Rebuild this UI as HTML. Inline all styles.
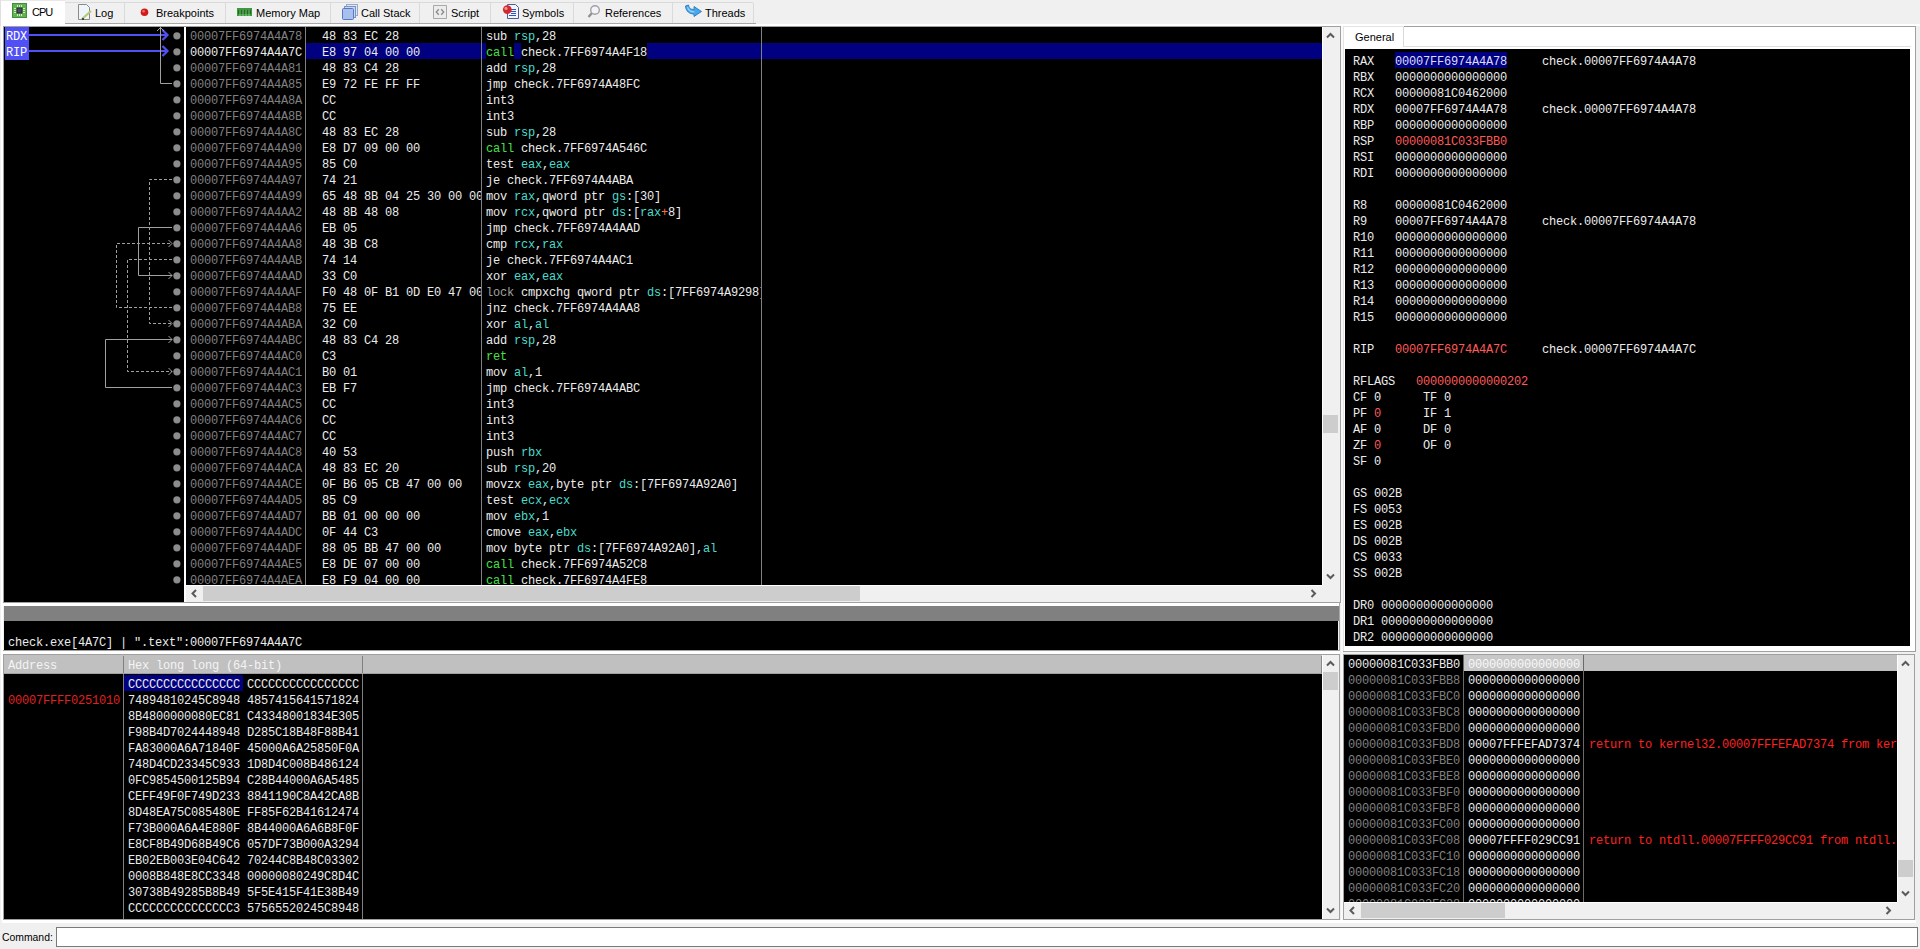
<!DOCTYPE html><html><head><meta charset="utf-8"><style>
*{margin:0;padding:0;box-sizing:border-box}
html,body{width:1920px;height:949px;overflow:hidden;background:#f0f0f0;position:relative}
div{position:absolute}
.m{font-family:"Liberation Mono",monospace;font-size:12px;letter-spacing:-0.2px;line-height:16px;white-space:pre;color:#ececec}
.s{font-family:"Liberation Sans",sans-serif;font-size:11px;line-height:14px;white-space:pre;color:#000}
.g{color:#808080}
.w{color:#ececec}
.r{color:#40c4c4}
.c{color:#3cc83c}
.red{color:#ff5a5a}
</style></head><body><div style="left:0px;top:0px;width:1920px;height:26px;background:#f0f0f0;"></div>
<div style="left:65px;top:2px;width:688px;height:1px;background:#dadada;"></div>
<div style="left:65px;top:23px;width:691px;height:1px;background:#a8a8a8;"></div>
<div style="left:0px;top:24px;width:1920px;height:2px;background:#ffffff;"></div>
<div style="left:0px;top:0px;width:65px;height:26px;background:#ffffff;border-left:1px solid #e0e0e0;border-top:1px solid #e8e8e8;"></div>
<div class="s" style="left:32px;top:5px;letter-spacing:-1px">CPU</div>
<div style="left:124px;top:3px;width:1px;height:20px;background:#dadada;"></div>
<div class="s" style="left:95px;top:6px;">Log</div>
<div style="left:225px;top:3px;width:1px;height:20px;background:#dadada;"></div>
<div class="s" style="left:156px;top:6px;">Breakpoints</div>
<div style="left:330px;top:3px;width:1px;height:20px;background:#dadada;"></div>
<div class="s" style="left:256px;top:6px;">Memory Map</div>
<div style="left:419px;top:3px;width:1px;height:20px;background:#dadada;"></div>
<div class="s" style="left:361px;top:6px;">Call Stack</div>
<div style="left:490px;top:3px;width:1px;height:20px;background:#dadada;"></div>
<div class="s" style="left:451px;top:6px;">Script</div>
<div style="left:573px;top:3px;width:1px;height:20px;background:#dadada;"></div>
<div class="s" style="left:522px;top:6px;">Symbols</div>
<div style="left:672px;top:3px;width:1px;height:20px;background:#dadada;"></div>
<div class="s" style="left:605px;top:6px;">References</div>
<div style="left:753px;top:3px;width:1px;height:20px;background:#dadada;"></div>
<div class="s" style="left:705px;top:6px;">Threads</div>

<svg width="760" height="24" style="position:absolute;left:0;top:0">
<rect x="12" y="3" width="15" height="15" fill="#3f8f3f"/>
<rect x="13" y="4" width="13" height="13" fill="#62b152"/>
<rect x="16.5" y="7.5" width="6" height="6" fill="#243024"/>
<rect x="17.5" y="8.5" width="4" height="4" fill="#4a4a6a"/>
<g stroke="#cdeec0" stroke-width="1">
<line x1="17.5" y1="5" x2="17.5" y2="7"/><line x1="19.5" y1="5" x2="19.5" y2="7"/><line x1="21.5" y1="5" x2="21.5" y2="7"/>
<line x1="17.5" y1="14" x2="17.5" y2="16"/><line x1="19.5" y1="14" x2="19.5" y2="16"/><line x1="21.5" y1="14" x2="21.5" y2="16"/>
<line x1="14" y1="8.5" x2="16" y2="8.5"/><line x1="14" y1="10.5" x2="16" y2="10.5"/><line x1="14" y1="12.5" x2="16" y2="12.5"/>
<line x1="23" y1="8.5" x2="25" y2="8.5"/><line x1="23" y1="10.5" x2="25" y2="10.5"/><line x1="23" y1="12.5" x2="25" y2="12.5"/>
</g>
<path d="M78.5 4.5 H86.5 L89.5 7.5 V19.5 H78.5 Z" fill="#eef6fb" stroke="#8a8a8a" stroke-width="1"/>
<path d="M82 19 L91 11" stroke="#b8c878" stroke-width="2.2"/>
<circle cx="83" cy="19" r="1" fill="#202020"/>
<circle cx="144.5" cy="12.3" r="3.8" fill="#d21a1a"/>
<circle cx="143.6" cy="11.3" r="1.3" fill="#f07070"/>
<rect x="237" y="8" width="15" height="8" fill="#3c9a3c"/>
<rect x="238" y="10" width="13" height="4" fill="#246824"/>
<g stroke="#8fd88f" stroke-width="0.8"><line x1="240" y1="10" x2="240" y2="16"/><line x1="243" y1="10" x2="243" y2="16"/><line x1="246" y1="10" x2="246" y2="16"/><line x1="249" y1="10" x2="249" y2="16"/></g>
<rect x="346.5" y="4.5" width="11" height="11" fill="#dde8f8" stroke="#98a8c8"/>
<rect x="344.5" y="6.5" width="11" height="11" fill="#c8d8f4" stroke="#8090c0"/>
<rect x="342.5" y="8.5" width="11" height="11" rx="1" fill="#a8c0ee" stroke="#5a78c0"/>
<path d="M433.5 5.5 H446.5 V18.5 H433.5 Z" fill="#ececec" stroke="#a8a8a8"/>
<path d="M438.8 9.3 L436.3 12 L438.8 14.7 M441.2 9.3 L443.7 12 L441.2 14.7" fill="none" stroke="#8a8a8a" stroke-width="1.3"/>
<path d="M507.5 4.5 H515.5 L518.5 7.5 V18.5 H507.5 Z" fill="#f4f6ff" stroke="#4a5aa0"/>
<g stroke="#3050c0" stroke-width="1"><line x1="511" y1="9.5" x2="516" y2="9.5"/><line x1="511" y1="11.5" x2="516" y2="11.5"/><line x1="511" y1="13.5" x2="516" y2="13.5"/><line x1="509" y1="15.5" x2="516" y2="15.5"/></g>
<circle cx="507.3" cy="9.6" r="4.4" fill="#d22a2a"/>
<circle cx="506" cy="8.4" r="1.6" fill="#f09090"/>
<circle cx="595" cy="10" r="4.3" fill="#f4f4f8" stroke="#a0a0a8" stroke-width="1.4"/>
<line x1="591.8" y1="13.3" x2="588.5" y2="17" stroke="#909090" stroke-width="2.2"/>
<path d="M685.5 6 C686 11.5 689.5 14 694 14 L694 16.5 L701.5 11.5 L694 6.5 L694 9.5 C691 9.5 689 8.5 688.5 5 Z" fill="#45a8ec" stroke="#2a78c0" stroke-width="0.9"/>
<path d="M687.5 7 C688.5 10.5 691 12 694.5 12" fill="none" stroke="#9ad8ff" stroke-width="1.1"/>
</svg>
<div style="left:3px;top:26px;width:1338px;height:577px;background:#a0a0a0;"></div>
<div style="left:4px;top:27px;width:180px;height:575px;background:#000;"></div>
<div style="left:184px;top:27px;width:2px;height:575px;background:#ffffff;"></div>
<div style="left:186px;top:27px;width:1136px;height:558px;background:#000;"></div>
<div style="left:1322px;top:27px;width:17px;height:558px;background:#f0f0f0;"></div>
<div style="left:1322px;top:27px;width:1px;height:558px;background:#ffffff;"></div>
<div style="left:1323px;top:415px;width:15px;height:18px;background:#cdcdcd;"></div>
<svg width="17" height="558" style="position:absolute;left:1322px;top:27px"><path d="M5.0,10.5 L8.5,7.0 L12.0,10.5" fill="none" stroke="#5a5a5a" stroke-width="2"/><path d="M5.0,547.5 L8.5,551.0 L12.0,547.5" fill="none" stroke="#5a5a5a" stroke-width="2"/></svg>
<div style="left:186px;top:585px;width:1136px;height:17px;background:#f0f0f0;"></div>
<div style="left:186px;top:585px;width:1136px;height:1px;background:#ffffff;"></div>
<div style="left:203px;top:586px;width:657px;height:15px;background:#cdcdcd;"></div>
<svg width="1136" height="17" style="position:absolute;left:186px;top:585px"><path d="M10,5.0 L6.5,8.5 L10,12.0" fill="none" stroke="#5a5a5a" stroke-width="2"/><path d="M1125.5,5.0 L1129.0,8.5 L1125.5,12.0" fill="none" stroke="#5a5a5a" stroke-width="2"/></svg>
<div style="left:1322px;top:585px;width:17px;height:17px;background:#f0f0f0;"></div>
<div style="left:1339px;top:27px;width:1px;height:575px;background:#f0f0f0;"></div>
<div style="left:186px;top:27px;width:1136px;height:558px;overflow:hidden">
<div style="left:120px;top:16px;width:1016px;height:16px;background:#000080"></div>
<div style="left:119px;top:0;width:1px;height:558px;background:#808080"></div>
<div style="left:295px;top:0;width:1px;height:558px;background:#808080"></div>
<div style="left:575px;top:0;width:1px;height:558px;background:#808080"></div>
<div class="m" style="left:4px;top:2px;color:#808080">00007FF6974A4A78</div>
<div style="left:120px;top:2px;width:175px;height:16px;overflow:hidden"><div class="m" style="left:16px;top:0">48 83 EC 28</div></div>
<div style="left:296px;top:0px;width:279px;height:16px;overflow:hidden"><div class="m" style="left:4px;top:2px"><span style="color:#ececec">sub </span><span style="color:#48dccc">rsp</span><span style="color:#ececec">,28</span></div></div>
<div class="m" style="left:4px;top:18px;color:#ececec">00007FF6974A4A7C</div>
<div style="left:120px;top:18px;width:175px;height:16px;overflow:hidden"><div class="m" style="left:16px;top:0">E8 97 04 00 00</div></div>
<div style="left:296px;top:16px;width:279px;height:16px;overflow:hidden"><div class="m" style="left:4px;top:2px"><span style="color:#48e048;background:#000;display:inline-block;height:14px;vertical-align:top;box-shadow:0 -2px 0 #000">call</span><span style="color:#ececec"> </span><span style="color:#ececec;background:#000;display:inline-block;height:14px;vertical-align:top;box-shadow:0 -2px 0 #000">check.7FF6974A4F18</span></div></div>
<div class="m" style="left:4px;top:34px;color:#808080">00007FF6974A4A81</div>
<div style="left:120px;top:34px;width:175px;height:16px;overflow:hidden"><div class="m" style="left:16px;top:0">48 83 C4 28</div></div>
<div style="left:296px;top:32px;width:279px;height:16px;overflow:hidden"><div class="m" style="left:4px;top:2px"><span style="color:#ececec">add </span><span style="color:#48dccc">rsp</span><span style="color:#ececec">,28</span></div></div>
<div class="m" style="left:4px;top:50px;color:#808080">00007FF6974A4A85</div>
<div style="left:120px;top:50px;width:175px;height:16px;overflow:hidden"><div class="m" style="left:16px;top:0">E9 72 FE FF FF</div></div>
<div style="left:296px;top:48px;width:279px;height:16px;overflow:hidden"><div class="m" style="left:4px;top:2px"><span style="color:#ececec">jmp check.7FF6974A48FC</span></div></div>
<div class="m" style="left:4px;top:66px;color:#808080">00007FF6974A4A8A</div>
<div style="left:120px;top:66px;width:175px;height:16px;overflow:hidden"><div class="m" style="left:16px;top:0">CC</div></div>
<div style="left:296px;top:64px;width:279px;height:16px;overflow:hidden"><div class="m" style="left:4px;top:2px"><span style="color:#ececec">int3</span></div></div>
<div class="m" style="left:4px;top:82px;color:#808080">00007FF6974A4A8B</div>
<div style="left:120px;top:82px;width:175px;height:16px;overflow:hidden"><div class="m" style="left:16px;top:0">CC</div></div>
<div style="left:296px;top:80px;width:279px;height:16px;overflow:hidden"><div class="m" style="left:4px;top:2px"><span style="color:#ececec">int3</span></div></div>
<div class="m" style="left:4px;top:98px;color:#808080">00007FF6974A4A8C</div>
<div style="left:120px;top:98px;width:175px;height:16px;overflow:hidden"><div class="m" style="left:16px;top:0">48 83 EC 28</div></div>
<div style="left:296px;top:96px;width:279px;height:16px;overflow:hidden"><div class="m" style="left:4px;top:2px"><span style="color:#ececec">sub </span><span style="color:#48dccc">rsp</span><span style="color:#ececec">,28</span></div></div>
<div class="m" style="left:4px;top:114px;color:#808080">00007FF6974A4A90</div>
<div style="left:120px;top:114px;width:175px;height:16px;overflow:hidden"><div class="m" style="left:16px;top:0">E8 D7 09 00 00</div></div>
<div style="left:296px;top:112px;width:279px;height:16px;overflow:hidden"><div class="m" style="left:4px;top:2px"><span style="color:#48e048">call</span><span style="color:#ececec"> check.7FF6974A546C</span></div></div>
<div class="m" style="left:4px;top:130px;color:#808080">00007FF6974A4A95</div>
<div style="left:120px;top:130px;width:175px;height:16px;overflow:hidden"><div class="m" style="left:16px;top:0">85 C0</div></div>
<div style="left:296px;top:128px;width:279px;height:16px;overflow:hidden"><div class="m" style="left:4px;top:2px"><span style="color:#ececec">test </span><span style="color:#48dccc">eax</span><span style="color:#ececec">,</span><span style="color:#48dccc">eax</span></div></div>
<div class="m" style="left:4px;top:146px;color:#808080">00007FF6974A4A97</div>
<div style="left:120px;top:146px;width:175px;height:16px;overflow:hidden"><div class="m" style="left:16px;top:0">74 21</div></div>
<div style="left:296px;top:144px;width:279px;height:16px;overflow:hidden"><div class="m" style="left:4px;top:2px"><span style="color:#ececec">je check.7FF6974A4ABA</span></div></div>
<div class="m" style="left:4px;top:162px;color:#808080">00007FF6974A4A99</div>
<div style="left:120px;top:162px;width:175px;height:16px;overflow:hidden"><div class="m" style="left:16px;top:0">65 48 8B 04 25 30 00 00 00</div></div>
<div style="left:296px;top:160px;width:279px;height:16px;overflow:hidden"><div class="m" style="left:4px;top:2px"><span style="color:#ececec">mov </span><span style="color:#48dccc">rax</span><span style="color:#ececec">,qword ptr </span><span style="color:#48dccc">gs</span><span style="color:#ececec">:[30]</span></div></div>
<div class="m" style="left:4px;top:178px;color:#808080">00007FF6974A4AA2</div>
<div style="left:120px;top:178px;width:175px;height:16px;overflow:hidden"><div class="m" style="left:16px;top:0">48 8B 48 08</div></div>
<div style="left:296px;top:176px;width:279px;height:16px;overflow:hidden"><div class="m" style="left:4px;top:2px"><span style="color:#ececec">mov </span><span style="color:#48dccc">rcx</span><span style="color:#ececec">,qword ptr </span><span style="color:#48dccc">ds</span><span style="color:#ececec">:[</span><span style="color:#48dccc">rax</span><span style="color:#ff7040">+</span><span style="color:#ececec">8]</span></div></div>
<div class="m" style="left:4px;top:194px;color:#808080">00007FF6974A4AA6</div>
<div style="left:120px;top:194px;width:175px;height:16px;overflow:hidden"><div class="m" style="left:16px;top:0">EB 05</div></div>
<div style="left:296px;top:192px;width:279px;height:16px;overflow:hidden"><div class="m" style="left:4px;top:2px"><span style="color:#ececec">jmp check.7FF6974A4AAD</span></div></div>
<div class="m" style="left:4px;top:210px;color:#808080">00007FF6974A4AA8</div>
<div style="left:120px;top:210px;width:175px;height:16px;overflow:hidden"><div class="m" style="left:16px;top:0">48 3B C8</div></div>
<div style="left:296px;top:208px;width:279px;height:16px;overflow:hidden"><div class="m" style="left:4px;top:2px"><span style="color:#ececec">cmp </span><span style="color:#48dccc">rcx</span><span style="color:#ececec">,</span><span style="color:#48dccc">rax</span></div></div>
<div class="m" style="left:4px;top:226px;color:#808080">00007FF6974A4AAB</div>
<div style="left:120px;top:226px;width:175px;height:16px;overflow:hidden"><div class="m" style="left:16px;top:0">74 14</div></div>
<div style="left:296px;top:224px;width:279px;height:16px;overflow:hidden"><div class="m" style="left:4px;top:2px"><span style="color:#ececec">je check.7FF6974A4AC1</span></div></div>
<div class="m" style="left:4px;top:242px;color:#808080">00007FF6974A4AAD</div>
<div style="left:120px;top:242px;width:175px;height:16px;overflow:hidden"><div class="m" style="left:16px;top:0">33 C0</div></div>
<div style="left:296px;top:240px;width:279px;height:16px;overflow:hidden"><div class="m" style="left:4px;top:2px"><span style="color:#ececec">xor </span><span style="color:#48dccc">eax</span><span style="color:#ececec">,</span><span style="color:#48dccc">eax</span></div></div>
<div class="m" style="left:4px;top:258px;color:#808080">00007FF6974A4AAF</div>
<div style="left:120px;top:258px;width:175px;height:16px;overflow:hidden"><div class="m" style="left:16px;top:0">F0 48 0F B1 0D E0 47 00 00</div></div>
<div style="left:296px;top:256px;width:279px;height:16px;overflow:hidden"><div class="m" style="left:4px;top:2px"><span style="color:#a0a0a0">lock</span><span style="color:#ececec"> cmpxchg qword ptr </span><span style="color:#48dccc">ds</span><span style="color:#ececec">:[7FF6974A9298]</span></div></div>
<div class="m" style="left:4px;top:274px;color:#808080">00007FF6974A4AB8</div>
<div style="left:120px;top:274px;width:175px;height:16px;overflow:hidden"><div class="m" style="left:16px;top:0">75 EE</div></div>
<div style="left:296px;top:272px;width:279px;height:16px;overflow:hidden"><div class="m" style="left:4px;top:2px"><span style="color:#ececec">jnz check.7FF6974A4AA8</span></div></div>
<div class="m" style="left:4px;top:290px;color:#808080">00007FF6974A4ABA</div>
<div style="left:120px;top:290px;width:175px;height:16px;overflow:hidden"><div class="m" style="left:16px;top:0">32 C0</div></div>
<div style="left:296px;top:288px;width:279px;height:16px;overflow:hidden"><div class="m" style="left:4px;top:2px"><span style="color:#ececec">xor </span><span style="color:#48dccc">al</span><span style="color:#ececec">,</span><span style="color:#48dccc">al</span></div></div>
<div class="m" style="left:4px;top:306px;color:#808080">00007FF6974A4ABC</div>
<div style="left:120px;top:306px;width:175px;height:16px;overflow:hidden"><div class="m" style="left:16px;top:0">48 83 C4 28</div></div>
<div style="left:296px;top:304px;width:279px;height:16px;overflow:hidden"><div class="m" style="left:4px;top:2px"><span style="color:#ececec">add </span><span style="color:#48dccc">rsp</span><span style="color:#ececec">,28</span></div></div>
<div class="m" style="left:4px;top:322px;color:#808080">00007FF6974A4AC0</div>
<div style="left:120px;top:322px;width:175px;height:16px;overflow:hidden"><div class="m" style="left:16px;top:0">C3</div></div>
<div style="left:296px;top:320px;width:279px;height:16px;overflow:hidden"><div class="m" style="left:4px;top:2px"><span style="color:#48e048">ret</span></div></div>
<div class="m" style="left:4px;top:338px;color:#808080">00007FF6974A4AC1</div>
<div style="left:120px;top:338px;width:175px;height:16px;overflow:hidden"><div class="m" style="left:16px;top:0">B0 01</div></div>
<div style="left:296px;top:336px;width:279px;height:16px;overflow:hidden"><div class="m" style="left:4px;top:2px"><span style="color:#ececec">mov </span><span style="color:#48dccc">al</span><span style="color:#ececec">,1</span></div></div>
<div class="m" style="left:4px;top:354px;color:#808080">00007FF6974A4AC3</div>
<div style="left:120px;top:354px;width:175px;height:16px;overflow:hidden"><div class="m" style="left:16px;top:0">EB F7</div></div>
<div style="left:296px;top:352px;width:279px;height:16px;overflow:hidden"><div class="m" style="left:4px;top:2px"><span style="color:#ececec">jmp check.7FF6974A4ABC</span></div></div>
<div class="m" style="left:4px;top:370px;color:#808080">00007FF6974A4AC5</div>
<div style="left:120px;top:370px;width:175px;height:16px;overflow:hidden"><div class="m" style="left:16px;top:0">CC</div></div>
<div style="left:296px;top:368px;width:279px;height:16px;overflow:hidden"><div class="m" style="left:4px;top:2px"><span style="color:#ececec">int3</span></div></div>
<div class="m" style="left:4px;top:386px;color:#808080">00007FF6974A4AC6</div>
<div style="left:120px;top:386px;width:175px;height:16px;overflow:hidden"><div class="m" style="left:16px;top:0">CC</div></div>
<div style="left:296px;top:384px;width:279px;height:16px;overflow:hidden"><div class="m" style="left:4px;top:2px"><span style="color:#ececec">int3</span></div></div>
<div class="m" style="left:4px;top:402px;color:#808080">00007FF6974A4AC7</div>
<div style="left:120px;top:402px;width:175px;height:16px;overflow:hidden"><div class="m" style="left:16px;top:0">CC</div></div>
<div style="left:296px;top:400px;width:279px;height:16px;overflow:hidden"><div class="m" style="left:4px;top:2px"><span style="color:#ececec">int3</span></div></div>
<div class="m" style="left:4px;top:418px;color:#808080">00007FF6974A4AC8</div>
<div style="left:120px;top:418px;width:175px;height:16px;overflow:hidden"><div class="m" style="left:16px;top:0">40 53</div></div>
<div style="left:296px;top:416px;width:279px;height:16px;overflow:hidden"><div class="m" style="left:4px;top:2px"><span style="color:#ececec">push </span><span style="color:#48dccc">rbx</span></div></div>
<div class="m" style="left:4px;top:434px;color:#808080">00007FF6974A4ACA</div>
<div style="left:120px;top:434px;width:175px;height:16px;overflow:hidden"><div class="m" style="left:16px;top:0">48 83 EC 20</div></div>
<div style="left:296px;top:432px;width:279px;height:16px;overflow:hidden"><div class="m" style="left:4px;top:2px"><span style="color:#ececec">sub </span><span style="color:#48dccc">rsp</span><span style="color:#ececec">,20</span></div></div>
<div class="m" style="left:4px;top:450px;color:#808080">00007FF6974A4ACE</div>
<div style="left:120px;top:450px;width:175px;height:16px;overflow:hidden"><div class="m" style="left:16px;top:0">0F B6 05 CB 47 00 00</div></div>
<div style="left:296px;top:448px;width:279px;height:16px;overflow:hidden"><div class="m" style="left:4px;top:2px"><span style="color:#ececec">movzx </span><span style="color:#48dccc">eax</span><span style="color:#ececec">,byte ptr </span><span style="color:#48dccc">ds</span><span style="color:#ececec">:[7FF6974A92A0]</span></div></div>
<div class="m" style="left:4px;top:466px;color:#808080">00007FF6974A4AD5</div>
<div style="left:120px;top:466px;width:175px;height:16px;overflow:hidden"><div class="m" style="left:16px;top:0">85 C9</div></div>
<div style="left:296px;top:464px;width:279px;height:16px;overflow:hidden"><div class="m" style="left:4px;top:2px"><span style="color:#ececec">test </span><span style="color:#48dccc">ecx</span><span style="color:#ececec">,</span><span style="color:#48dccc">ecx</span></div></div>
<div class="m" style="left:4px;top:482px;color:#808080">00007FF6974A4AD7</div>
<div style="left:120px;top:482px;width:175px;height:16px;overflow:hidden"><div class="m" style="left:16px;top:0">BB 01 00 00 00</div></div>
<div style="left:296px;top:480px;width:279px;height:16px;overflow:hidden"><div class="m" style="left:4px;top:2px"><span style="color:#ececec">mov </span><span style="color:#48dccc">ebx</span><span style="color:#ececec">,1</span></div></div>
<div class="m" style="left:4px;top:498px;color:#808080">00007FF6974A4ADC</div>
<div style="left:120px;top:498px;width:175px;height:16px;overflow:hidden"><div class="m" style="left:16px;top:0">0F 44 C3</div></div>
<div style="left:296px;top:496px;width:279px;height:16px;overflow:hidden"><div class="m" style="left:4px;top:2px"><span style="color:#ececec">cmove </span><span style="color:#48dccc">eax</span><span style="color:#ececec">,</span><span style="color:#48dccc">ebx</span></div></div>
<div class="m" style="left:4px;top:514px;color:#808080">00007FF6974A4ADF</div>
<div style="left:120px;top:514px;width:175px;height:16px;overflow:hidden"><div class="m" style="left:16px;top:0">88 05 BB 47 00 00</div></div>
<div style="left:296px;top:512px;width:279px;height:16px;overflow:hidden"><div class="m" style="left:4px;top:2px"><span style="color:#ececec">mov byte ptr </span><span style="color:#48dccc">ds</span><span style="color:#ececec">:[7FF6974A92A0],</span><span style="color:#48dccc">al</span></div></div>
<div class="m" style="left:4px;top:530px;color:#808080">00007FF6974A4AE5</div>
<div style="left:120px;top:530px;width:175px;height:16px;overflow:hidden"><div class="m" style="left:16px;top:0">E8 DE 07 00 00</div></div>
<div style="left:296px;top:528px;width:279px;height:16px;overflow:hidden"><div class="m" style="left:4px;top:2px"><span style="color:#48e048">call</span><span style="color:#ececec"> check.7FF6974A52C8</span></div></div>
<div class="m" style="left:4px;top:546px;color:#808080">00007FF6974A4AEA</div>
<div style="left:120px;top:546px;width:175px;height:16px;overflow:hidden"><div class="m" style="left:16px;top:0">E8 F9 04 00 00</div></div>
<div style="left:296px;top:544px;width:279px;height:16px;overflow:hidden"><div class="m" style="left:4px;top:2px"><span style="color:#48e048">call</span><span style="color:#ececec"> check.7FF6974A4FE8</span></div></div>
</div>
<div style="left:4px;top:27px;width:180px;height:575px;overflow:hidden">
<div style="left:1px;top:0;width:24px;height:33px;background:#5050f4"></div>
<div class="m" style="left:2px;top:2px;color:#fff">RDX</div>
<div class="m" style="left:2px;top:18px;color:#fff">RIP</div>
<svg width="180" height="575" style="position:absolute;left:0;top:0"><line x1="25" y1="8" x2="163" y2="8" stroke="#5050f4" stroke-width="2"/><polyline points="158.5,3 163.5,8 158.5,13" fill="none" stroke="#5050f4" stroke-width="2.2"/><line x1="25" y1="24" x2="163" y2="24" stroke="#5050f4" stroke-width="2"/><polyline points="158.5,19 163.5,24 158.5,29" fill="none" stroke="#5050f4" stroke-width="2.2"/><circle cx="172.9" cy="8.8" r="3.6" fill="#8c8c8c"/><circle cx="172.9" cy="24.8" r="3.6" fill="#8c8c8c"/><circle cx="172.9" cy="40.8" r="3.6" fill="#8c8c8c"/><circle cx="172.9" cy="56.8" r="3.6" fill="#8c8c8c"/><circle cx="172.9" cy="72.8" r="3.6" fill="#8c8c8c"/><circle cx="172.9" cy="88.8" r="3.6" fill="#8c8c8c"/><circle cx="172.9" cy="104.8" r="3.6" fill="#8c8c8c"/><circle cx="172.9" cy="120.8" r="3.6" fill="#8c8c8c"/><circle cx="172.9" cy="136.8" r="3.6" fill="#8c8c8c"/><circle cx="172.9" cy="152.8" r="3.6" fill="#8c8c8c"/><circle cx="172.9" cy="168.8" r="3.6" fill="#8c8c8c"/><circle cx="172.9" cy="184.8" r="3.6" fill="#8c8c8c"/><circle cx="172.9" cy="200.8" r="3.6" fill="#8c8c8c"/><circle cx="172.9" cy="216.8" r="3.6" fill="#8c8c8c"/><circle cx="172.9" cy="232.8" r="3.6" fill="#8c8c8c"/><circle cx="172.9" cy="248.8" r="3.6" fill="#8c8c8c"/><circle cx="172.9" cy="264.8" r="3.6" fill="#8c8c8c"/><circle cx="172.9" cy="280.8" r="3.6" fill="#8c8c8c"/><circle cx="172.9" cy="296.8" r="3.6" fill="#8c8c8c"/><circle cx="172.9" cy="312.8" r="3.6" fill="#8c8c8c"/><circle cx="172.9" cy="328.8" r="3.6" fill="#8c8c8c"/><circle cx="172.9" cy="344.8" r="3.6" fill="#8c8c8c"/><circle cx="172.9" cy="360.8" r="3.6" fill="#8c8c8c"/><circle cx="172.9" cy="376.8" r="3.6" fill="#8c8c8c"/><circle cx="172.9" cy="392.8" r="3.6" fill="#8c8c8c"/><circle cx="172.9" cy="408.8" r="3.6" fill="#8c8c8c"/><circle cx="172.9" cy="424.8" r="3.6" fill="#8c8c8c"/><circle cx="172.9" cy="440.8" r="3.6" fill="#8c8c8c"/><circle cx="172.9" cy="456.8" r="3.6" fill="#8c8c8c"/><circle cx="172.9" cy="472.8" r="3.6" fill="#8c8c8c"/><circle cx="172.9" cy="488.8" r="3.6" fill="#8c8c8c"/><circle cx="172.9" cy="504.8" r="3.6" fill="#8c8c8c"/><circle cx="172.9" cy="520.8" r="3.6" fill="#8c8c8c"/><circle cx="172.9" cy="536.8" r="3.6" fill="#8c8c8c"/><circle cx="172.9" cy="552.8" r="3.6" fill="#8c8c8c"/><polyline points="156.5,0 156.5,56.5 168,56.5" fill="none" stroke="#a0a0a0" stroke-width="1"/><polyline points="153,4 156.5,0.5 160,4" fill="none" stroke="#a0a0a0" stroke-width="1"/><polyline points="168,152.5 145.5,152.5 145.5,296.5 168,296.5" fill="none" stroke="#a0a0a0" stroke-width="1" stroke-dasharray="3,2"/><polyline points="164.5,293.0 168,296.5 164.5,300.0" fill="none" stroke="#a0a0a0" stroke-width="1"/><polyline points="168,200.5 134.5,200.5 134.5,248.5 168,248.5" fill="none" stroke="#a0a0a0" stroke-width="1"/><polyline points="164.5,245.0 168,248.5 164.5,252.0" fill="none" stroke="#a0a0a0" stroke-width="1"/><polyline points="168,280.5 112.5,280.5 112.5,216.5 168,216.5" fill="none" stroke="#a0a0a0" stroke-width="1" stroke-dasharray="3,2"/><polyline points="164.5,213.0 168,216.5 164.5,220.0" fill="none" stroke="#a0a0a0" stroke-width="1"/><polyline points="168,232.5 123.5,232.5 123.5,344.5 168,344.5" fill="none" stroke="#a0a0a0" stroke-width="1" stroke-dasharray="3,2"/><polyline points="164.5,341.0 168,344.5 164.5,348.0" fill="none" stroke="#a0a0a0" stroke-width="1"/><polyline points="168,360.5 101.5,360.5 101.5,312.5 168,312.5" fill="none" stroke="#a0a0a0" stroke-width="1"/><polyline points="164.5,309.0 168,312.5 164.5,316.0" fill="none" stroke="#a0a0a0" stroke-width="1"/></svg>
</div>
<div style="left:3px;top:602px;width:1337px;height:1px;background:#a0a0a0;"></div>
<div style="left:3px;top:603px;width:1337px;height:3px;background:#ffffff;"></div>
<div style="left:3px;top:650px;width:1337px;height:1px;background:#a0a0a0;"></div>
<div style="left:3px;top:651px;width:1337px;height:3px;background:#ffffff;"></div>
<div style="left:1339px;top:602px;width:1px;height:49px;background:#a8a8a8;"></div>
<div style="left:4px;top:606px;width:1335px;height:15px;background:#808080;"></div>
<div style="left:4px;top:621px;width:1334px;height:29px;background:#000;"></div>
<div class="m" style="left:8px;top:635px;">check.exe[4A7C] | ".text":00007FF6974A4A7C</div>
<div style="left:1343px;top:26px;width:573px;height:626px;background:#a0a0a0;"></div>
<div style="left:1343px;top:26px;width:61px;height:21px;background:#e4e4e4;"></div>
<div style="left:1343px;top:26px;width:1px;height:625px;background:#e4e4e4;"></div>
<div style="left:1344px;top:27px;width:571px;height:624px;background:#ffffff;"></div>
<div style="left:1345px;top:49px;width:565px;height:597px;background:#000;"></div>
<div class="s" style="left:1355px;top:30px;">General</div>
<div style="left:1403px;top:27px;width:1px;height:20px;background:#d9d9d9;"></div>
<div style="left:1403px;top:46px;width:508px;height:1px;background:#e0e0e0;"></div>
<div class="m" style="left:1353px;top:54px;">RAX</div>
<div style="left:1395px;top:52px;width:112px;height:16px;background:#000080;"></div>
<div class="m" style="left:1395px;top:54px;color:#dcdcff;">00007FF6974A4A78</div>
<div class="m" style="left:1542px;top:54px;">check.00007FF6974A4A78</div>
<div class="m" style="left:1353px;top:70px;">RBX</div>
<div class="m" style="left:1395px;top:70px;">0000000000000000</div>
<div class="m" style="left:1353px;top:86px;">RCX</div>
<div class="m" style="left:1395px;top:86px;">00000081C0462000</div>
<div class="m" style="left:1353px;top:102px;">RDX</div>
<div class="m" style="left:1395px;top:102px;">00007FF6974A4A78</div>
<div class="m" style="left:1542px;top:102px;">check.00007FF6974A4A78</div>
<div class="m" style="left:1353px;top:118px;">RBP</div>
<div class="m" style="left:1395px;top:118px;">0000000000000000</div>
<div class="m" style="left:1353px;top:134px;">RSP</div>
<div class="m" style="left:1395px;top:134px;color:#ff5a5a;">00000081C033FBB0</div>
<div class="m" style="left:1353px;top:150px;">RSI</div>
<div class="m" style="left:1395px;top:150px;">0000000000000000</div>
<div class="m" style="left:1353px;top:166px;">RDI</div>
<div class="m" style="left:1395px;top:166px;">0000000000000000</div>
<div class="m" style="left:1353px;top:198px;">R8</div>
<div class="m" style="left:1395px;top:198px;">00000081C0462000</div>
<div class="m" style="left:1353px;top:214px;">R9</div>
<div class="m" style="left:1395px;top:214px;">00007FF6974A4A78</div>
<div class="m" style="left:1542px;top:214px;">check.00007FF6974A4A78</div>
<div class="m" style="left:1353px;top:230px;">R10</div>
<div class="m" style="left:1395px;top:230px;">0000000000000000</div>
<div class="m" style="left:1353px;top:246px;">R11</div>
<div class="m" style="left:1395px;top:246px;">0000000000000000</div>
<div class="m" style="left:1353px;top:262px;">R12</div>
<div class="m" style="left:1395px;top:262px;">0000000000000000</div>
<div class="m" style="left:1353px;top:278px;">R13</div>
<div class="m" style="left:1395px;top:278px;">0000000000000000</div>
<div class="m" style="left:1353px;top:294px;">R14</div>
<div class="m" style="left:1395px;top:294px;">0000000000000000</div>
<div class="m" style="left:1353px;top:310px;">R15</div>
<div class="m" style="left:1395px;top:310px;">0000000000000000</div>
<div class="m" style="left:1353px;top:342px;">RIP</div>
<div class="m" style="left:1395px;top:342px;color:#ff5a5a;">00007FF6974A4A7C</div>
<div class="m" style="left:1542px;top:342px;">check.00007FF6974A4A7C</div>
<div class="m" style="left:1353px;top:374px;">RFLAGS</div>
<div class="m" style="left:1416px;top:374px;color:#ff5a5a;">0000000000000202</div>
<div class="m" style="left:1353px;top:390px;">CF</div>
<div class="m" style="left:1374px;top:390px;">0</div>
<div class="m" style="left:1423px;top:390px;">TF 0</div>
<div class="m" style="left:1353px;top:406px;">PF</div>
<div class="m" style="left:1374px;top:406px;color:#ff5a5a;">0</div>
<div class="m" style="left:1423px;top:406px;">IF 1</div>
<div class="m" style="left:1353px;top:422px;">AF</div>
<div class="m" style="left:1374px;top:422px;">0</div>
<div class="m" style="left:1423px;top:422px;">DF 0</div>
<div class="m" style="left:1353px;top:438px;">ZF</div>
<div class="m" style="left:1374px;top:438px;color:#ff5a5a;">0</div>
<div class="m" style="left:1423px;top:438px;">OF 0</div>
<div class="m" style="left:1353px;top:454px;">SF 0</div>
<div class="m" style="left:1353px;top:486px;">GS 002B</div>
<div class="m" style="left:1353px;top:502px;">FS 0053</div>
<div class="m" style="left:1353px;top:518px;">ES 002B</div>
<div class="m" style="left:1353px;top:534px;">DS 002B</div>
<div class="m" style="left:1353px;top:550px;">CS 0033</div>
<div class="m" style="left:1353px;top:566px;">SS 002B</div>
<div class="m" style="left:1353px;top:598px;">DR0 0000000000000000</div>
<div class="m" style="left:1353px;top:614px;">DR1 0000000000000000</div>
<div class="m" style="left:1353px;top:630px;">DR2 0000000000000000</div>
<div style="left:1341px;top:26px;width:2px;height:894px;background:#fafafa;"></div>
<div style="left:3px;top:654px;width:1337px;height:266px;background:#a0a0a0;"></div>
<div style="left:4px;top:655px;width:1318px;height:264px;background:#000;"></div>
<div style="left:4px;top:655px;width:1318px;height:19px;background:#c0c0c0;"></div>
<div style="left:123px;top:656px;width:1px;height:18px;background:#808080;"></div>
<div style="left:362px;top:656px;width:1px;height:18px;background:#808080;"></div>
<div style="left:1321px;top:656px;width:1px;height:18px;background:#8a8a8a;"></div>
<div style="left:4px;top:673px;width:1318px;height:1px;background:#a0a0a0;"></div>
<div class="m" style="left:8px;top:658px;color:#f4f4f4;">Address</div>
<div class="m" style="left:128px;top:658px;color:#f4f4f4;">Hex long long (64-bit)</div>
<div style="left:123px;top:674px;width:1px;height:245px;background:#808080;"></div>
<div style="left:362px;top:674px;width:1px;height:245px;background:#808080;"></div>
<div style="left:1322px;top:655px;width:17px;height:264px;background:#f0f0f0;"></div>
<div style="left:1322px;top:655px;width:1px;height:264px;background:#ffffff;"></div>
<div style="left:1323px;top:672px;width:15px;height:18px;background:#cdcdcd;"></div>
<svg width="17" height="264" style="position:absolute;left:1322px;top:655px"><path d="M5.0,10.5 L8.5,7.0 L12.0,10.5" fill="none" stroke="#5a5a5a" stroke-width="2"/><path d="M5.0,253.5 L8.5,257.0 L12.0,253.5" fill="none" stroke="#5a5a5a" stroke-width="2"/></svg>
<div style="left:124px;top:675px;width:119px;height:16px;background:#000080;"></div>
<div class="m" style="left:128px;top:677px;">CCCCCCCCCCCCCCCC</div>
<div class="m" style="left:247px;top:677px;">CCCCCCCCCCCCCCCC</div>
<div class="m" style="left:128px;top:693px;">74894810245C8948</div>
<div class="m" style="left:247px;top:693px;">4857415641571824</div>
<div class="m" style="left:128px;top:709px;">8B4800000080EC81</div>
<div class="m" style="left:247px;top:709px;">C43348001834E305</div>
<div class="m" style="left:128px;top:725px;">F98B4D7024448948</div>
<div class="m" style="left:247px;top:725px;">D285C18B48F88B41</div>
<div class="m" style="left:128px;top:741px;">FA83000A6A71840F</div>
<div class="m" style="left:247px;top:741px;">45000A6A25850F0A</div>
<div class="m" style="left:128px;top:757px;">748D4CD23345C933</div>
<div class="m" style="left:247px;top:757px;">1D8D4C008B486124</div>
<div class="m" style="left:128px;top:773px;">0FC9854500125B94</div>
<div class="m" style="left:247px;top:773px;">C28B44000A6A5485</div>
<div class="m" style="left:128px;top:789px;">CEFF49F0F749D233</div>
<div class="m" style="left:247px;top:789px;">8841190C8A42CA8B</div>
<div class="m" style="left:128px;top:805px;">8D48EA75C085480E</div>
<div class="m" style="left:247px;top:805px;">FF85F62B41612474</div>
<div class="m" style="left:128px;top:821px;">F73B000A6A4E880F</div>
<div class="m" style="left:247px;top:821px;">8B44000A6A6B8F0F</div>
<div class="m" style="left:128px;top:837px;">E8CF8B49D68B49C6</div>
<div class="m" style="left:247px;top:837px;">057DF73B000A3294</div>
<div class="m" style="left:128px;top:853px;">EB02EB003E04C642</div>
<div class="m" style="left:247px;top:853px;">70244C8B48C03302</div>
<div class="m" style="left:128px;top:869px;">0008B848E8CC3348</div>
<div class="m" style="left:247px;top:869px;">00000080249C8D4C</div>
<div class="m" style="left:128px;top:885px;">30738B49285B8B49</div>
<div class="m" style="left:247px;top:885px;">5F5E415F41E38B49</div>
<div class="m" style="left:128px;top:901px;">CCCCCCCCCCCCCCC3</div>
<div class="m" style="left:247px;top:901px;">57565520245C8948</div>
<div class="m" style="left:8px;top:693px;color:#e02020;">00007FFFF0251010</div>
<div style="left:1343px;top:654px;width:572px;height:266px;background:#a0a0a0;"></div>
<div style="left:1344px;top:655px;width:553px;height:247px;background:#000;"></div>
<div style="left:1897px;top:655px;width:17px;height:247px;background:#f0f0f0;"></div>
<div style="left:1897px;top:655px;width:1px;height:247px;background:#ffffff;"></div>
<div style="left:1898px;top:860px;width:15px;height:17px;background:#cdcdcd;"></div>
<svg width="17" height="247" style="position:absolute;left:1897px;top:655px"><path d="M5.0,10.5 L8.5,7.0 L12.0,10.5" fill="none" stroke="#5a5a5a" stroke-width="2"/><path d="M5.0,236.5 L8.5,240.0 L12.0,236.5" fill="none" stroke="#5a5a5a" stroke-width="2"/></svg>
<div style="left:1344px;top:902px;width:553px;height:17px;background:#f0f0f0;"></div>
<div style="left:1344px;top:902px;width:553px;height:1px;background:#ffffff;"></div>
<div style="left:1361px;top:903px;width:144px;height:15px;background:#cdcdcd;"></div>
<svg width="553" height="17" style="position:absolute;left:1344px;top:902px"><path d="M10,5.0 L6.5,8.5 L10,12.0" fill="none" stroke="#5a5a5a" stroke-width="2"/><path d="M542.5,5.0 L546.0,8.5 L542.5,12.0" fill="none" stroke="#5a5a5a" stroke-width="2"/></svg>
<div style="left:1897px;top:902px;width:17px;height:17px;background:#f0f0f0;"></div>
<div style="left:1463px;top:655px;width:434px;height:16px;background:#c0c0c0;"></div>
<div style="left:1464px;top:655px;width:119px;height:16px;background:#c8c8c8;"></div>
<div style="left:1463px;top:655px;width:1px;height:247px;background:#6a6a6a;"></div>
<div style="left:1583px;top:655px;width:1px;height:247px;background:#6a6a6a;"></div>
<div style="left:1344px;top:655px;width:553px;height:247px;overflow:hidden">
<div class="m" style="left:4px;top:2px;color:#ececec">00000081C033FBB0</div>
<div class="m" style="left:124px;top:2px;color:#f8f8f8">0000000000000000</div>
<div class="m" style="left:4px;top:18px;color:#808080">00000081C033FBB8</div>
<div class="m" style="left:124px;top:18px;color:#ececec">0000000000000000</div>
<div class="m" style="left:4px;top:34px;color:#808080">00000081C033FBC0</div>
<div class="m" style="left:124px;top:34px;color:#ececec">0000000000000000</div>
<div class="m" style="left:4px;top:50px;color:#808080">00000081C033FBC8</div>
<div class="m" style="left:124px;top:50px;color:#ececec">0000000000000000</div>
<div class="m" style="left:4px;top:66px;color:#808080">00000081C033FBD0</div>
<div class="m" style="left:124px;top:66px;color:#ececec">0000000000000000</div>
<div class="m" style="left:4px;top:82px;color:#808080">00000081C033FBD8</div>
<div class="m" style="left:124px;top:82px;color:#ececec">00007FFFEFAD7374</div>
<div class="m" style="left:245px;top:82px;color:#ff2020">return to kernel32.00007FFFEFAD7374 from kernel32.00007FFFEFAD7350</div>
<div class="m" style="left:4px;top:98px;color:#808080">00000081C033FBE0</div>
<div class="m" style="left:124px;top:98px;color:#ececec">0000000000000000</div>
<div class="m" style="left:4px;top:114px;color:#808080">00000081C033FBE8</div>
<div class="m" style="left:124px;top:114px;color:#ececec">0000000000000000</div>
<div class="m" style="left:4px;top:130px;color:#808080">00000081C033FBF0</div>
<div class="m" style="left:124px;top:130px;color:#ececec">0000000000000000</div>
<div class="m" style="left:4px;top:146px;color:#808080">00000081C033FBF8</div>
<div class="m" style="left:124px;top:146px;color:#ececec">0000000000000000</div>
<div class="m" style="left:4px;top:162px;color:#808080">00000081C033FC00</div>
<div class="m" style="left:124px;top:162px;color:#ececec">0000000000000000</div>
<div class="m" style="left:4px;top:178px;color:#808080">00000081C033FC08</div>
<div class="m" style="left:124px;top:178px;color:#ececec">00007FFFF029CC91</div>
<div class="m" style="left:245px;top:178px;color:#ff2020">return to ntdll.00007FFFF029CC91 from ntdll.00007FFFF029CC70</div>
<div class="m" style="left:4px;top:194px;color:#808080">00000081C033FC10</div>
<div class="m" style="left:124px;top:194px;color:#ececec">0000000000000000</div>
<div class="m" style="left:4px;top:210px;color:#808080">00000081C033FC18</div>
<div class="m" style="left:124px;top:210px;color:#ececec">0000000000000000</div>
<div class="m" style="left:4px;top:226px;color:#808080">00000081C033FC20</div>
<div class="m" style="left:124px;top:226px;color:#ececec">0000000000000000</div>
<div class="m" style="left:4px;top:242px;color:#808080">00000081C033FC28</div>
<div class="m" style="left:124px;top:242px;color:#ececec">0000000000000000</div>
</div>
<div style="left:1px;top:26px;width:2px;height:894px;background:#ffffff;"></div>
<div style="left:0px;top:920px;width:1920px;height:29px;background:#f0f0f0;"></div>
<div style="left:2px;top:920px;width:1914px;height:3px;background:#ffffff;"></div>
<div class="s" style="left:2px;top:931px;font-size:10.4px">Command:</div>
<div style="left:56px;top:927px;width:1862px;height:20px;background:#ffffff;border:1px solid #7a7a7a;"></div></body></html>
